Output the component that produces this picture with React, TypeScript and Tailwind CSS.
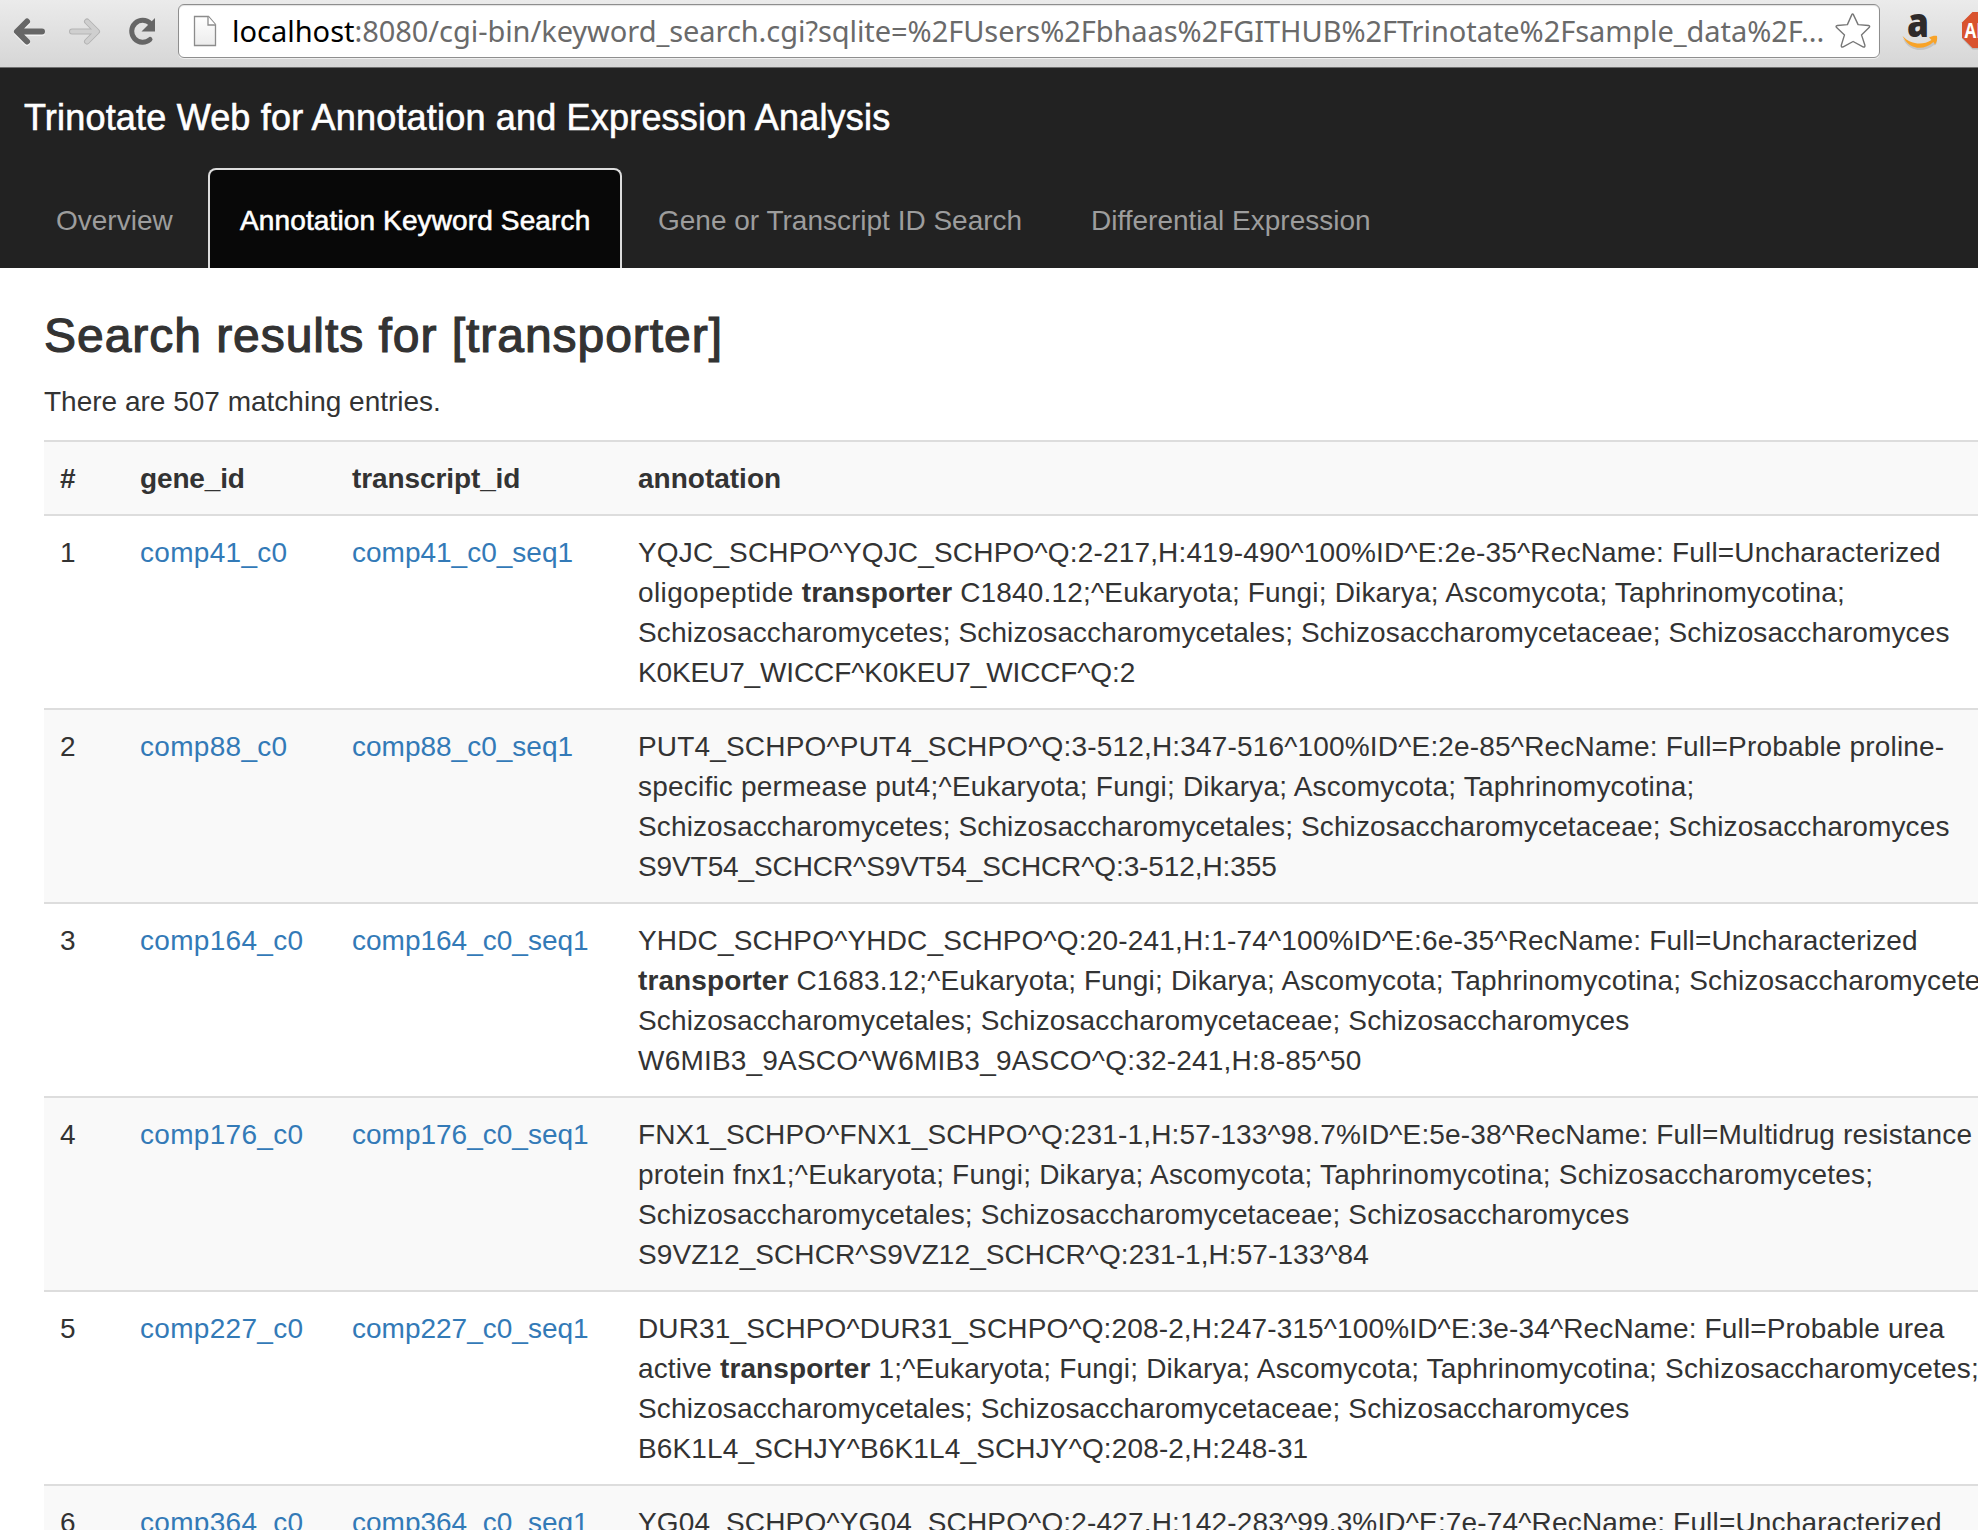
import type { ReactNode } from "react";

type Row = { n: number; gene: string; lines: ReactNode[] };

function S({ c, children }: { c: string; children: ReactNode }) {
  return <span className={c}>{children}</span>;
}

const Hit = () => <strong className="font-bold tracking-[0.1px]">transporter</strong>;

const rows: Row[] = [
  {
    n: 1,
    gene: "comp41_c0",
    lines: [
      <S c="tracking-[0.175px]">YQJC_SCHPO^YQJC_SCHPO^Q:2-217,H:419-490^100%ID^E:2e-35^RecName: Full=Uncharacterized</S>,
      <>
        <S c="tracking-[0.38px]">oligopeptide </S>
        <Hit />
        <S c="tracking-[0.175px]"> C1840.12;^Eukaryota; Fungi; Dikarya; Ascomycota; Taphrinomycotina;</S>
      </>,
      <S c="tracking-[0.13px]">Schizosaccharomycetes; Schizosaccharomycetales; Schizosaccharomycetaceae; Schizosaccharomyces</S>,
      <S c="tracking-[-0.13px]">K0KEU7_WICCF^K0KEU7_WICCF^Q:2</S>,
    ],
  },
  {
    n: 2,
    gene: "comp88_c0",
    lines: [
      <S c="tracking-[0.175px]">PUT4_SCHPO^PUT4_SCHPO^Q:3-512,H:347-516^100%ID^E:2e-85^RecName: Full=Probable proline-</S>,
      <S c="tracking-[0.21px]">specific permease put4;^Eukaryota; Fungi; Dikarya; Ascomycota; Taphrinomycotina;</S>,
      <S c="tracking-[0.13px]">Schizosaccharomycetes; Schizosaccharomycetales; Schizosaccharomycetaceae; Schizosaccharomyces</S>,
      <S c="tracking-[-0.1px]">S9VT54_SCHCR^S9VT54_SCHCR^Q:3-512,H:355</S>,
    ],
  },
  {
    n: 3,
    gene: "comp164_c0",
    lines: [
      <S c="tracking-[0.165px]">YHDC_SCHPO^YHDC_SCHPO^Q:20-241,H:1-74^100%ID^E:6e-35^RecName: Full=Uncharacterized</S>,
      <>
        <Hit />
        <S c="tracking-[0.175px]"> C1683.12;^Eukaryota; Fungi; Dikarya; Ascomycota; Taphrinomycotina; Schizosaccharomycetes;</S>
      </>,
      <S c="tracking-[0.135px]">Schizosaccharomycetales; Schizosaccharomycetaceae; Schizosaccharomyces</S>,
      <S c="tracking-[0.2px]">W6MIB3_9ASCO^W6MIB3_9ASCO^Q:32-241,H:8-85^50</S>,
    ],
  },
  {
    n: 4,
    gene: "comp176_c0",
    lines: [
      <S c="tracking-[0.15px]">FNX1_SCHPO^FNX1_SCHPO^Q:231-1,H:57-133^98.7%ID^E:5e-38^RecName: Full=Multidrug resistance</S>,
      <S c="tracking-[0.21px]">protein fnx1;^Eukaryota; Fungi; Dikarya; Ascomycota; Taphrinomycotina; Schizosaccharomycetes;</S>,
      <S c="tracking-[0.135px]">Schizosaccharomycetales; Schizosaccharomycetaceae; Schizosaccharomyces</S>,
      <S c="tracking-[0.08px]">S9VZ12_SCHCR^S9VZ12_SCHCR^Q:231-1,H:57-133^84</S>,
    ],
  },
  {
    n: 5,
    gene: "comp227_c0",
    lines: [
      <S c="tracking-[0.145px]">DUR31_SCHPO^DUR31_SCHPO^Q:208-2,H:247-315^100%ID^E:3e-34^RecName: Full=Probable urea</S>,
      <>
        <S c="tracking-[0.15px]">active </S>
        <Hit />
        <S c="tracking-[0.19px]"> 1;^Eukaryota; Fungi; Dikarya; Ascomycota; Taphrinomycotina; Schizosaccharomycetes;</S>
      </>,
      <S c="tracking-[0.135px]">Schizosaccharomycetales; Schizosaccharomycetaceae; Schizosaccharomyces</S>,
      <S c="tracking-[0.14px]">B6K1L4_SCHJY^B6K1L4_SCHJY^Q:208-2,H:248-31</S>,
    ],
  },
  {
    n: 6,
    gene: "comp364_c0",
    lines: [
      <S c="tracking-[0.165px]">YG04_SCHPO^YG04_SCHPO^Q:2-427,H:142-283^99.3%ID^E:7e-74^RecName: Full=Uncharacterized</S>,
    ],
  },
];

function BrowserBar() {
  return (
    <header className="flex h-[68px] items-start border-b border-[#6f6f6f] bg-linear-to-b from-[#ebebeb] to-[#d6d6d6]">
      <svg className="h-[67px] w-[178px] shrink-0" viewBox="0 0 178 67" fill="none">
        <g stroke="#fff" strokeOpacity=".6" strokeWidth="6" strokeLinecap="round" strokeLinejoin="round" transform="translate(0 1.5)">
          <path d="M27 21.5 17 31.5l10 10M18 31.5h24" />
        </g>
        <path d="M27 21.5 17 31.5l10 10M18 31.5h24" stroke="#666" strokeWidth="6" strokeLinecap="round" strokeLinejoin="round" />
        <path d="M87 21.5l10 10-10 10M96 31.5H72" stroke="#b4b4b4" strokeWidth="6" strokeLinecap="round" strokeLinejoin="round" />
        <path d="M87 21.5l10 10-10 10M96 31.5H72" stroke="#cfcfcf" strokeWidth="4" strokeLinecap="round" strokeLinejoin="round" />
        <path d="M150.5 23.5A11 11 0 1 0 150 39.5" stroke="#666" strokeWidth="5" strokeLinecap="round" />
        <path d="M155 18v13.500h-13.500z" fill="#666" />
      </svg>
      <div className="mt-1 flex h-[54px] w-[1702px] shrink-0 items-center rounded-[6px] border border-[#8e8e8e] bg-white shadow-[inset_0_1px_1px_#e2e2e2,0_1px_0_#efefef]">
        <svg className="ml-[14px] h-[33px] w-[24px] shrink-0" viewBox="0 0 24 33">
          <defs>
            <linearGradient id="sheet" x1="0" y1="0" x2="0" y2="1">
              <stop offset="0" stopColor="#fff" />
              <stop offset="1" stopColor="#ececec" />
            </linearGradient>
          </defs>
          <path d="M1.5 1.5h14l7 8v21h-21z" fill="url(#sheet)" stroke="#8c8c8c" strokeWidth="1.3" />
          <path d="M15 1.5v8.5h7.5" fill="#fff" stroke="#8c8c8c" strokeWidth="1.3" />
        </svg>
        <div className="ml-[15px] w-[1599px] shrink-0 whitespace-nowrap font-['Noto_Sans',sans-serif] text-[29px] leading-[52px] text-[#6a6a6a]">
          <span className="text-black">localhost</span>
          <span className="tracking-[-0.06px]">
            :8080/cgi-bin/keyword_search.cgi?sqlite=%2FUsers%2Fbhaas%2FGITHUB%2FTrinotate%2Fsample_data%2F...
          </span>
        </div>
        <svg className="ml-[4px] h-[36px] w-[36px] shrink-0" viewBox="0 0 36 36" fill="#fff" stroke="#777" strokeWidth="1.4" strokeLinejoin="round">
          <path d="M16.7 1.9q.9-2 1.8 0l4.600 9.700 10.400.9q2 .4.600 2.100l-7.600 7.300 3.400 10.400q.3 2.300-1.900 1.600l-9.900-5.400-9.900 5.400q-2.200.7-1.900-1.600l3.200-10.400-7.900-7.300q-1.400-1.700.8-2.100l10-.9z" />
        </svg>
      </div>
      <svg className="h-[67px] w-[98px] shrink-0" viewBox="0 0 98 67">
        <path d="M23 38.500C31 47.500 44 48.500 52.500 42.500L57 39C57 43 56 46 54 45C44 53 29 52 23 38.500Z" fill="#c4c4c4" />
        <text x="27" y="36.500" fontFamily="Open Sans" fontWeight="800" fontSize="41" fill="#2e2a2a" textLength="22" lengthAdjust="spacingAndGlyphs">a</text>
        <path d="M22.500 36C31 45 43 45.500 51.500 40L49 37.500C52.500 35.500 55.500 35.500 57 36 57.500 39 57 42 55 44.500L53.500 42C44 51 29 50 22.500 36Z" fill="#f8a328" />
        <path d="M92.500 12.500H120v37H92.500L82 38.500v-15.500z" fill="#b9b9b9" />
        <path d="M92.500 12H120v36H92.500L82 37.500v-15z" fill="#d9532f" />
        <text x="84.500" y="37.500" fontFamily="Open Sans" fontWeight="700" fontSize="20.500" fill="#fff" textLength="34" lengthAdjust="spacingAndGlyphs">ABP</text>
      </svg>
    </header>
  );
}

const tab = "mr-1 rounded-t-lg border-2 border-b-0 px-[30px] h-[100px] leading-[101px] whitespace-nowrap";

function NavBar() {
  return (
    <nav className="h-[200px] bg-[#222] text-[#9d9d9d]">
      <div className="h-[100px] pl-6 text-[36px] leading-[100px] tracking-[0.19px] text-white [-webkit-text-stroke:0.6px_#fff]">
        Trinotate Web for Annotation and Expression Analysis
      </div>
      <div className="flex pl-6">
        <a className={`${tab} w-[180px] border-transparent`}>Overview</a>
        <a className={`${tab} w-[414px] border-[#ddd] bg-[#080808] tracking-[0.13px] text-white [-webkit-text-stroke:0.6px_#fff]`}>
          Annotation Keyword Search
        </a>
        <a className={`${tab} w-[429px] border-transparent`}>Gene or Transcript ID Search</a>
        <a className={`${tab} border-transparent`}>Differential Expression</a>
      </div>
    </nav>
  );
}

function Results() {
  return (
    <table className="mt-[18px] w-[1990px] table-fixed border-collapse text-left">
      <colgroup>
        <col className="w-[80px]" />
        <col className="w-[212px]" />
        <col className="w-[286px]" />
        <col />
      </colgroup>
      <thead>
        <tr className="bg-[#f9f9f9] shadow-[inset_0_2px_0_#ddd] [&>th]:px-4 [&>th]:pt-[19px] [&>th]:pb-[15px]">
          <th>#</th>
          <th className="tracking-[-0.15px]">gene_id</th>
          <th className="tracking-[-0.1px]">transcript_id</th>
          <th>annotation</th>
        </tr>
      </thead>
      <tbody>
        {rows.map((r) => (
          <tr
            key={r.n}
            className="align-top shadow-[inset_0_2px_0_#ddd] even:bg-[#f9f9f9] [&>td]:px-4 [&>td]:pt-[19px] [&>td]:pb-[15px]"
          >
            <td>{r.n}</td>
            <td className="tracking-[0.3px] text-[#337ab7]">{r.gene}</td>
            <td className="text-[#337ab7]">{r.gene}_seq1</td>
            <td className="whitespace-nowrap">
              {r.lines.map((line, i) => (
                <div key={i} className="h-10">
                  {line}
                </div>
              ))}
            </td>
          </tr>
        ))}
      </tbody>
    </table>
  );
}

export default function App() {
  return (
    <div className="h-[1530px] w-[1978px] overflow-hidden bg-white font-['Liberation_Sans',sans-serif] text-[28px] leading-10 text-[#333]">
      <BrowserBar />
      <NavBar />
      <main className="pl-[44px]">
        <h3 className="pt-[41px] text-[48px] leading-[53px] tracking-[0.96px] [-webkit-text-stroke:1.2px_#333]">
          Search results for [transporter]
        </h3>
        <p className="mt-5">There are 507 matching entries.</p>
        <Results />
      </main>
    </div>
  );
}
